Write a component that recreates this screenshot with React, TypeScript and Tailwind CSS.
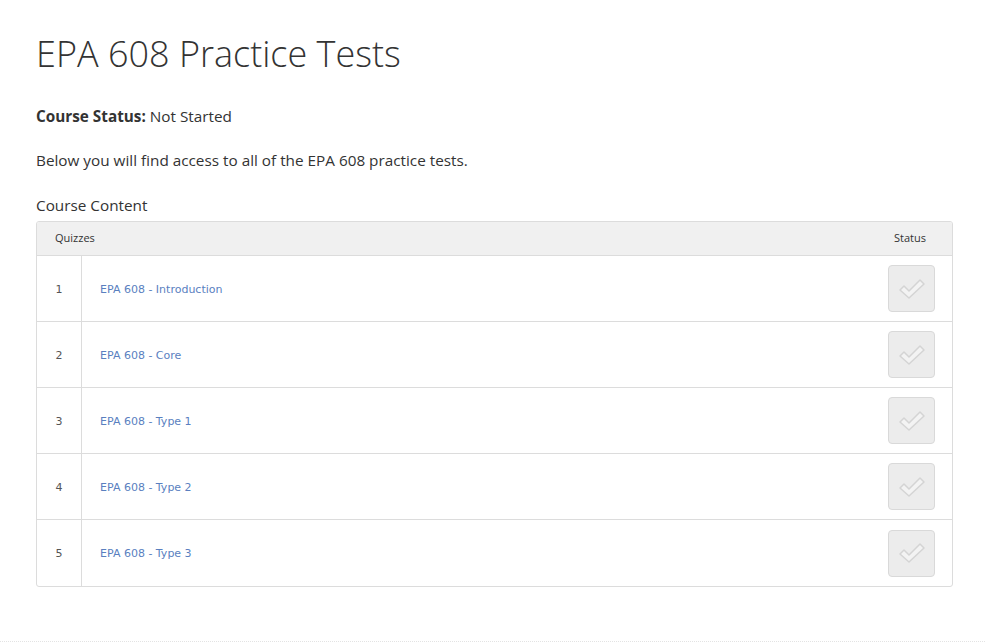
import React from "react";

type Quiz = { id: number; title: string };

const quizzes: Quiz[] = [
  { id: 1, title: "EPA 608 - Introduction" },
  { id: 2, title: "EPA 608 - Core" },
  { id: 3, title: "EPA 608 - Type 1" },
  { id: 4, title: "EPA 608 - Type 2" },
  { id: 5, title: "EPA 608 - Type 3" },
];

const StatusBox: React.FC = () => (
  <div className="flex h-[47px] w-[47px] items-center justify-center rounded-[4px] border border-[#d9d9d9] bg-[#ececec]">
    <svg width="30" height="24" viewBox="0 0 30 24">
      <path
        d="M3 13 L7 9 L12 14 L23 3 L27 7 L12 21 Z"
        fill="#f3f3f3"
        stroke="#d4d4d4"
        strokeWidth="1.5"
        strokeLinejoin="round"
      />
    </svg>
  </div>
);

const App: React.FC = () => {
  return (
    <div className="h-[642px] w-full overflow-hidden bg-white font-['Open_Sans',sans-serif] text-[#333]">
      <div className="pl-9 pr-8 pt-[32px]">
        <h1 className="text-[36px] font-light leading-[44px] text-[#333]">
          EPA 608 Practice Tests
        </h1>
        <p className="mt-[29px] text-[15.3px] leading-[22px]">
          <span className="font-bold">Course Status:</span> Not Started
        </p>
        <p className="mt-[22px] text-[15.3px] leading-[22px]">
          Below you will find access to all of the EPA 608 practice tests.
        </p>
        <p className="mt-[23px] text-[15.3px] leading-[22px]">Course Content</p>

        <div className="mt-[5px] overflow-hidden rounded-[3px] border border-[#dcdcdc]">
          <div className="flex h-[34px] items-center justify-between border-b border-[#dcdcdc] bg-[#f0f0f0] pl-[18px] pr-[26px] text-[11px] text-[#333]">
            <span>Quizzes</span>
            <span>Status</span>
          </div>
          {quizzes.map((q, i) => (
            <div
              key={q.id}
              className={
                "flex h-[66px] items-stretch font-['DejaVu_Sans',Verdana,sans-serif] text-[11px] " +
                (i < quizzes.length - 1 ? "border-b border-[#dcdcdc]" : "")
              }
            >
              <div className="flex w-[45px] items-center justify-center border-r border-[#dcdcdc] pt-[3px] text-[#555]">
                {q.id}
              </div>
              <div className="flex flex-1 items-center pl-[18px] pt-[3px] text-[#5a7fbf]">
                {q.title}
              </div>
              <div className="flex items-center pr-[17px]">
                <StatusBox />
              </div>
            </div>
          ))}
        </div>
      </div>
      <div className="mt-[54px] border-b border-dotted border-[#e3e3e3]" />
    </div>
  );
};

export default App;
